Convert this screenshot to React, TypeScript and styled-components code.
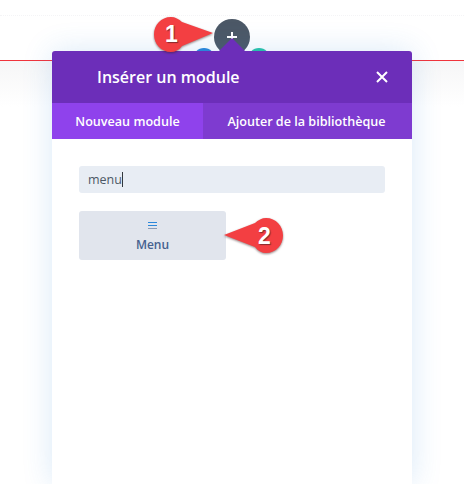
import React from 'react';
import styled, { createGlobalStyle } from 'styled-components';

const GlobalStyle = createGlobalStyle`
  html, body {
    margin: 0;
    padding: 0;
    background: #fff;
  }
  body {
    font-family: 'Open Sans', 'Liberation Sans', sans-serif;
  }
`;

const Page = styled.div`
  position: relative;
  width: 464px;
  height: 484px;
  overflow: hidden;
  background: #fff;
`;

const TopBand = styled.div`
  height: 15px;
  border-bottom: 1px dotted #f4f4f6;
  margin-bottom: 44px;
`;

const RedLine = styled.div`
  height: 1px;
  background: #f0343c;
`;

const UnderBand = styled.div`
  height: 46px;
  background: linear-gradient(#f6f6f7, #fff);
`;

const Circle = styled.div<{ $bg: string; $x: number; $y: number; $size: number }>`
  position: absolute;
  left: ${(p) => p.$x}px;
  top: ${(p) => p.$y}px;
  width: ${(p) => p.$size}px;
  height: ${(p) => p.$size}px;
  border-radius: 50%;
  background: ${(p) => p.$bg};
`;

const AddIcon = styled.span`
  position: absolute;
  left: 13px;
  top: 13px;
  color: #fff;
  line-height: 0;
`;

const Modal = styled.div`
  position: absolute;
  left: 52px;
  top: 51px;
  width: 360px;
  height: 433px;
  background: #fff;
  border-radius: 3px 3px 0 0;
  box-shadow: 0 0 30px rgba(43, 135, 218, 0.18);
  display: flex;
  flex-direction: column;
`;

const Notch = styled.div`
  position: absolute;
  left: 167px;
  top: -13px;
  width: 0;
  height: 0;
  border-left: 13px solid transparent;
  border-right: 13px solid transparent;
  border-bottom: 13px solid #6c2eb9;
`;

const Header = styled.div`
  height: 52px;
  flex: none;
  display: flex;
  align-items: center;
  justify-content: space-between;
  padding: 0 24px 0 45px;
  background: #6c2eb9;
  border-radius: 3px 3px 0 0;
`;

const Title = styled.h1`
  margin: 0;
  color: #fff;
  font-size: 16px;
  font-weight: 600;
  line-height: 22px;
`;

const CloseIcon = styled.svg`
  display: block;
  width: 12px;
  height: 12px;
`;

const Tabs = styled.div`
  height: 36px;
  flex: none;
  display: flex;
  background: #7e3bd0;
`;

const Tab = styled.div<{ $active?: boolean }>`
  width: ${(p) => (p.$active ? '151px' : 'auto')};
  flex: ${(p) => (p.$active ? 'none' : '1')};
  box-sizing: border-box;
  padding-right: ${(p) => (p.$active ? '0' : '2px')};
  display: flex;
  align-items: center;
  justify-content: center;
  background: ${(p) => (p.$active ? '#8f42ec' : '#7e3bd0')};
  color: #fff;
  font-size: 12.6px;
  font-weight: 600;
`;

const Body = styled.div`
  padding: 27px 27px 0;
  display: flex;
  flex-direction: column;
  align-items: flex-start;
  gap: 18px;
`;

const Search = styled.div`
  width: 306px;
  height: 27px;
  box-sizing: border-box;
  padding-left: 9px;
  display: flex;
  align-items: center;
  background: #e8edf4;
  border-radius: 3px;
  color: #4c5866;
  font-size: 12.5px;
`;

const Caret = styled.span`
  width: 1px;
  height: 15px;
  background: #32373c;
`;

const ModuleButton = styled.div`
  width: 147px;
  height: 49px;
  box-sizing: border-box;
  padding-top: 11px;
  display: flex;
  flex-direction: column;
  align-items: center;
  gap: 6px;
  background: #e1e5ed;
  border-radius: 3px;
  color: #46618f;
  font-size: 12px;
  font-weight: 600;
`;

const MenuIcon = styled.svg`
  display: block;
  width: 9px;
  height: 8px;
`;

const MenuLabel = styled.span`
  line-height: 18px;
`;

const Callout = styled.svg<{ $x: number; $y: number; $flip?: boolean }>`
  position: absolute;
  left: ${(p) => p.$x}px;
  top: ${(p) => p.$y}px;
  width: 62px;
  height: 38px;
  transform: ${(p) => (p.$flip ? 'scaleX(-1)' : 'none')};
  filter: drop-shadow(0 1px 1px rgba(60, 30, 30, 0.55));
`;

const CalloutNumber = styled.span<{ $x: number; $y: number }>`
  position: absolute;
  left: ${(p) => p.$x}px;
  top: ${(p) => p.$y}px;
  color: #fff;
  font-family: 'Liberation Sans', Arial, sans-serif;
  font-size: 23px;
  font-weight: 700;
  line-height: 26px;
  text-shadow: 1px 1px 1px rgba(60, 30, 30, 0.6);
`;

export default function App() {
  return (
    <Page>
      <GlobalStyle />
      <TopBand />
      <RedLine />
      <UnderBand />
      <Circle $bg="#2b87da" $x={193} $y={48} $size={22} />
      <Circle $bg="#29c4a9" $x={248} $y={48} $size={22} />
      <Circle $bg="#4c5866" $x={214} $y={19} $size={36}>
        <AddIcon>
          <svg width="10" height="10" viewBox="0 0 10 10">
            <path d="M5 0v10M0 5h10" stroke="currentColor" strokeWidth="2" />
          </svg>
        </AddIcon>
      </Circle>
      <Modal>
        <Notch />
        <Header>
          <Title>Insérer un module</Title>
          <CloseIcon viewBox="0 0 12 12">
            <path d="M1 1l10 10M11 1L1 11" stroke="#fff" strokeWidth="2" />
          </CloseIcon>
        </Header>
        <Tabs>
          <Tab $active>Nouveau module</Tab>
          <Tab>Ajouter de la bibliothèque</Tab>
        </Tabs>
        <Body>
          <Search>
            menu
            <Caret />
          </Search>
          <ModuleButton>
            <MenuIcon viewBox="0 0 9 8">
              <path d="M0 0.500h9M0 3.500h9" stroke="#2b87da" strokeWidth="1" />
              <path d="M0 6.500h9" stroke="#8a9bb5" strokeWidth="1" />
            </MenuIcon>
            <MenuLabel>Menu</MenuLabel>
          </ModuleButton>
        </Body>
      </Modal>
      <Callout $x={153} $y={16} viewBox="0 0 62 38">
        <path d="M18 1C22 1 26 3 29 6L60 17L29 30C26 34 22 36 18 36C8 36 1 28 1 18.500C1 9 8 1 18 1Z" fill="#f33f42" />
      </Callout>
      <CalloutNumber $x={165} $y={21}>1</CalloutNumber>
      <Callout $x={222} $y={217} $flip viewBox="0 0 62 38">
        <path d="M18 1C22 1 26 3 29 6L60 18L29 30C26 34 22 36 18 36C8 36 1 28 1 18.500C1 9 8 1 18 1Z" fill="#f33f42" />
      </Callout>
      <CalloutNumber $x={258} $y={223}>2</CalloutNumber>
    </Page>
  );
}
